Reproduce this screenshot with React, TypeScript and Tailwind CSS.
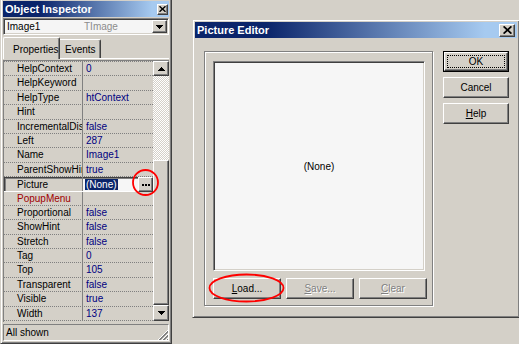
import React from "react";

type Prop = { name: string; value: string; selected?: boolean; red?: boolean };

const props: Prop[] = [
  { name: "HelpContext", value: "0" },
  { name: "HelpKeyword", value: "" },
  { name: "HelpType", value: "htContext" },
  { name: "Hint", value: "" },
  { name: "IncrementalDisplay", value: "false" },
  { name: "Left", value: "287" },
  { name: "Name", value: "Image1" },
  { name: "ParentShowHint", value: "true" },
  { name: "Picture", value: "(None)", selected: true },
  { name: "PopupMenu", value: "", red: true },
  { name: "Proportional", value: "false" },
  { name: "ShowHint", value: "false" },
  { name: "Stretch", value: "false" },
  { name: "Tag", value: "0" },
  { name: "Top", value: "105" },
  { name: "Transparent", value: "false" },
  { name: "Visible", value: "true" },
  { name: "Width", value: "137" },
];

// win2000 bevels
const raised =
  "border border-t-white border-l-white border-r-[#404040] border-b-[#404040] shadow-[inset_-1px_-1px_0_#808080] bg-[#d4d0c8]";
const frame =
  "border border-t-[#d4d0c8] border-l-[#d4d0c8] border-r-[#404040] border-b-[#404040] shadow-[inset_1px_1px_0_#fff,inset_-1px_-1px_0_#808080] bg-[#d4d0c8] p-[2px]";
const sunken =
  "border border-t-[#808080] border-l-[#808080] border-r-white border-b-white shadow-[inset_1px_1px_0_#404040,inset_-1px_-1px_0_#d4d0c8]";
const titleBar =
  "flex items-center justify-between bg-[linear-gradient(to_right,#0a246a_22%,#a6caf0_90%)] text-white font-bold text-[11px] pl-[2px]";

function Arrow({ dir }: { dir: "up" | "down" }) {
  const rows = dir === "down" ? [0, 1, 2, 3] : [3, 2, 1, 0];
  return (
    <svg width="7" height="4" viewBox="0 0 7 4" shapeRendering="crispEdges">
      {rows.map((inset, y) => (
        <rect key={y} x={inset} y={y} width={7 - inset * 2} height="1" fill="#000" />
      ))}
    </svg>
  );
}

function CloseX({ size }: { size: number }) {
  return (
    <svg width={size} height={size - 1} viewBox="0 0 8 7">
      <line x1="0.5" y1="0.3" x2="7.5" y2="6.7" stroke="#000" strokeWidth="1.6" />
      <line x1="7.5" y1="0.3" x2="0.5" y2="6.7" stroke="#000" strokeWidth="1.6" />
    </svg>
  );
}

function Grip() {
  return (
    <svg width="11" height="11" viewBox="0 0 11 11" shapeRendering="crispEdges">
      {[0, 4, 8].map((o) => (
        <g key={o}>
          <line x1={o + 1} y1="11" x2="11" y2={o + 1} stroke="#fff" />
          <line x1={o + 2} y1="11" x2="11" y2={o + 2} stroke="#808080" />
          <line x1={o + 3} y1="11" x2="11" y2={o + 3} stroke="#808080" />
        </g>
      ))}
    </svg>
  );
}

function PropRow({ p }: { p: Prop }) {
  if (p.selected) {
    return (
      <div className="flex h-[14.4px] border-b border-white shadow-[inset_1px_1px_0_#404040,inset_2px_2px_0_#808080]">
        <div className="w-[79px] shrink-0 border-r border-[#808080] pl-[13px] leading-[14px] pt-[1px] whitespace-nowrap overflow-hidden text-black">
          {p.name}
        </div>
        <div className="flex-1 flex items-center bg-[#f6f6f6] mt-[2px] pl-[2px]">
          <span className="bg-[#0a246a] text-white px-[1px] leading-[11px]">{p.value}</span>
          <div className="flex-1" />
          <div className={`${raised} w-[15px] h-[15px] flex items-center justify-center`}>
            <svg width="8" height="2" viewBox="0 0 8 2" shapeRendering="crispEdges">
              <rect x="0" y="0" width="2" height="2" fill="#000" />
              <rect x="3" y="0" width="2" height="2" fill="#000" />
              <rect x="6" y="0" width="2" height="2" fill="#000" />
            </svg>
          </div>
        </div>
      </div>
    );
  }
  return (
    <div className="flex h-[14.4px] border-b border-dotted border-[#808080] leading-[13px]">
      <div
        className={`w-[79px] shrink-0 border-r border-[#808080] pl-[13px] whitespace-nowrap overflow-hidden ${
          p.red ? "text-[#a00000]" : "text-black"
        }`}
      >
        {p.name}
      </div>
      <div className="flex-1 pl-[3px] text-[#000080] whitespace-nowrap overflow-hidden">{p.value}</div>
    </div>
  );
}

function ObjectInspector() {
  return (
    <div className={`${frame} absolute left-0 top-[-2px] w-[172px] h-[346px] flex flex-col`}>
      <div className={`${titleBar} h-[16px]`}>
        <span>Object Inspector</span>
        <div className={`${raised} w-[11px] h-[11px] mr-[1px] flex items-center justify-center`}>
          <CloseX size={7} />
        </div>
      </div>

      <div className={`${sunken} mt-[1px] h-[17px] flex items-center bg-[#f5f5f5]`}>
        <span className="pl-[3px] w-[80px] text-black">Image1</span>
        <span className="flex-1 text-[#8c8c8c]">TImage</span>
        <div className={`${raised} w-[15px] h-[13px] mr-[1px] flex items-center justify-center`}>
          <Arrow dir="down" />
        </div>
      </div>

      <div className="h-[23px] flex items-end">
        <div className="relative z-10 mb-[-1px] h-[22px] w-[57px] bg-[#d4d0c8] border-l border-t border-white border-r border-r-[#404040] shadow-[inset_-1px_0_0_#808080] rounded-t-[2px] pl-[9px] pt-[4px] text-black">
          Properties
        </div>
        <div className="h-[19px] w-[41px] border-t border-white border-r border-r-[#404040] shadow-[inset_-1px_0_0_#808080] rounded-tr-[2px] pl-[5px] pt-[2px] text-black">
          Events
        </div>
      </div>

      <div className="border-t border-white pt-[1px]">
        <div className="h-[262px] flex border-l border-t border-[#808080]">
          <div className="flex-1 flex flex-col">
            <div className="h-[1px] border-b border-dotted border-[#808080]" />
            {props.map((p) => (
              <PropRow key={p.name} p={p} />
            ))}
          </div>
          <div className="w-[16px] flex flex-col">
            <div className={`${raised} h-[15px] flex items-center justify-center`}>
              <Arrow dir="up" />
            </div>
            <div className="h-[84px] bg-[repeating-conic-gradient(#ffffff_0%_25%,#d4d0c8_0%_50%)] bg-[length:2px_2px]" />
            <div className={`${raised} flex-1`} />
            <div className={`${raised} h-[16px] flex items-center justify-center`}>
              <Arrow dir="down" />
            </div>
            <div className="h-[1px]" />
          </div>
        </div>
      </div>

      <div className="mt-[2px] h-[17px] flex items-center justify-between border border-t-[#808080] border-l-[#808080] border-r-white border-b-white">
        <span className="pl-[2px] text-black">All shown</span>
        <div className="self-end">
          <Grip />
        </div>
      </div>
    </div>
  );
}

function DlgButton({
  label,
  mnemonic,
  disabled,
  width,
}: {
  label: string;
  mnemonic?: boolean;
  disabled?: boolean;
  width: string;
}) {
  const first = mnemonic ? label.slice(0, 1) : "";
  const rest = mnemonic ? label.slice(1) : label;
  return (
    <div
      className={`${raised} ${width} h-[21px] flex items-center justify-center ${
        disabled ? "text-[#808080] [text-shadow:1px_1px_0_#fff]" : "text-black"
      }`}
    >
      <span>
        {first && <span className="underline">{first}</span>}
        {rest}
      </span>
    </div>
  );
}

function PictureEditor() {
  return (
    <div className={`${frame} absolute left-[192px] top-[19px] w-[328px] h-[299px] flex flex-col`}>
      <div className={`${titleBar} h-[16px]`}>
        <span>Picture Editor</span>
        <div className={`${raised} w-[16px] h-[13px] mr-[2px] flex items-center justify-center`}>
          <CloseX size={9} />
        </div>
      </div>

      <div className="flex items-start pl-[9px] pt-[13px]">
        <div className="w-[229px] h-[255px] border border-[#808080] shadow-[inset_1px_1px_0_#fff,1px_1px_0_#fff] pl-[8px] pt-[9px] flex flex-col">
          <div className={`${sunken} w-[212px] h-[210px] bg-[#f6f6f6] flex items-center justify-center text-black`}>
            (None)
          </div>
          <div className="mt-[7px] flex gap-[5px]">
            <DlgButton label="Load..." mnemonic width="w-[68px]" />
            <DlgButton label="Save..." mnemonic disabled width="w-[68px]" />
            <DlgButton label="Clear" mnemonic disabled width="w-[68px]" />
          </div>
        </div>

        <div className="ml-[10px] w-[66px] flex flex-col gap-[5px]">
          <div className="h-[21px] border border-black flex">
            <div className={`${raised} flex-1 flex p-[2px]`}>
              <div className="flex-1 border border-dotted border-black flex items-center justify-center text-black">
                OK
              </div>
            </div>
          </div>
          <DlgButton label="Cancel" width="w-[66px]" />
          <DlgButton label="Help" mnemonic width="w-[66px]" />
        </div>
      </div>
    </div>
  );
}

export default function App() {
  return (
    <div className="relative w-[519px] h-[344px] overflow-hidden bg-[#d4d0c8] text-[10px] font-['Liberation_Sans',Arial,sans-serif]">
      <ObjectInspector />
      <PictureEditor />
      {/* red marks drawn over the screenshot */}
      <svg className="absolute left-0 top-0 pointer-events-none" width="519" height="344">
        <ellipse cx="145.5" cy="182.5" rx="12.5" ry="12.5" fill="none" stroke="#ff0000" strokeWidth="1.8" />
        <ellipse cx="246.5" cy="288" rx="37" ry="13.5" fill="none" stroke="#ff0000" strokeWidth="1.8" />
      </svg>
    </div>
  );
}
